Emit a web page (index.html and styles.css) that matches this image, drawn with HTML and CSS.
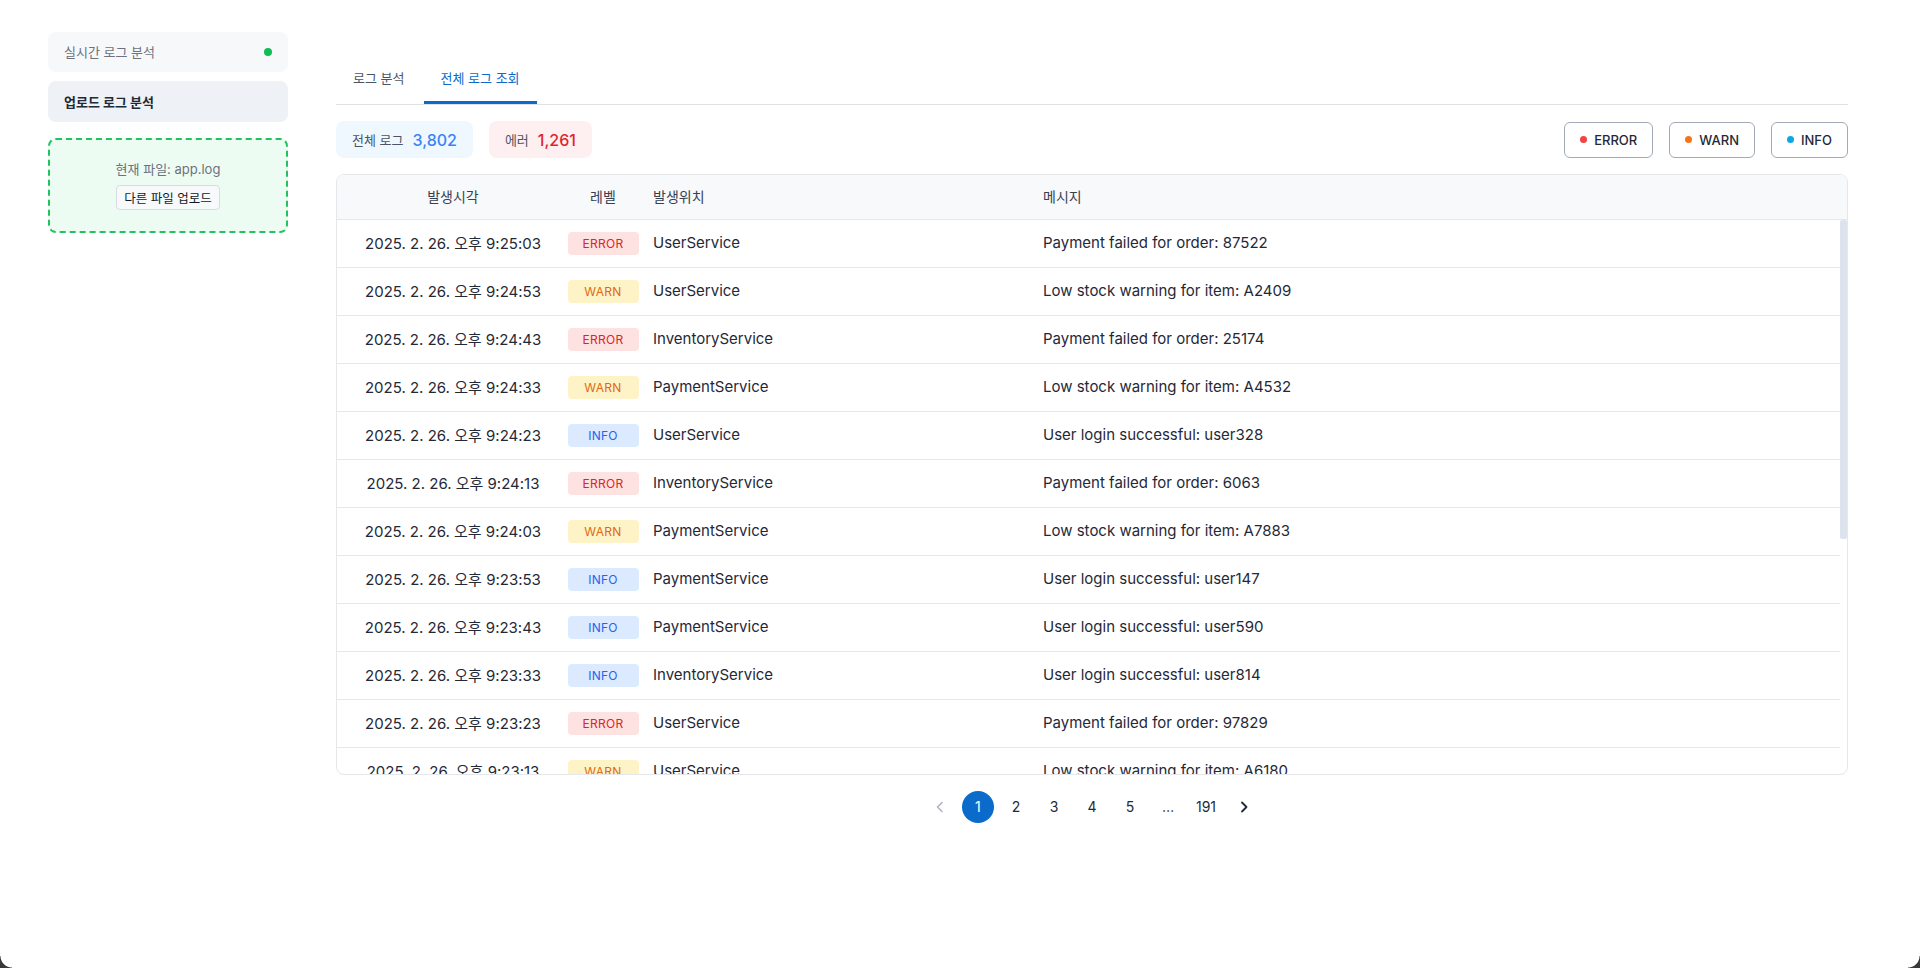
FILE: index.html
```html
<!DOCTYPE html>
<html lang="ko">
<head>
<meta charset="utf-8">
<title>로그 분석</title>
<link rel="stylesheet" href="styles.css">
</head>
<body>
<div class="page">
  <aside class="sidebar">
    <div class="nav-item nav-live">
      <span>실시간 로그 분석</span>
      <span class="live-dot"></span>
    </div>
    <div class="nav-item nav-active">업로드 로그 분석</div>
    <div class="upload-box">
      <div class="current-file">현재 파일: app.log</div>
      <button class="upload-btn">다른 파일 업로드</button>
    </div>
  </aside>

  <main class="main">
    <div class="tabs">
      <div class="tab">로그 분석</div>
      <div class="tab tab-active">전체 로그 조회</div>
    </div>

    <div class="toolbar">
      <div class="stats">
        <div class="stat stat-total"><span class="stat-label">전체 로그</span><span class="stat-num">3,802</span></div>
        <div class="stat stat-error"><span class="stat-label">에러</span><span class="stat-num">1,261</span></div>
      </div>
      <div class="filters">
        <button class="filter"><span class="dot dot-error"></span>ERROR</button>
        <button class="filter"><span class="dot dot-warn"></span>WARN</button>
        <button class="filter"><span class="dot dot-info"></span>INFO</button>
      </div>
    </div>

    <div class="table">
      <div class="row head">
        <div class="c-time">발생시각</div>
        <div class="c-level">레벨</div>
        <div class="c-src">발생위치</div>
        <div class="c-msg">메시지</div>
      </div>
      <div class="body">
        <div class="row"><div class="c-time">2025. 2. 26. 오후 9:25:03</div><div class="c-level"><span class="badge b-error">ERROR</span></div><div class="c-src">UserService</div><div class="c-msg">Payment failed for order: 87522</div></div>
        <div class="row"><div class="c-time">2025. 2. 26. 오후 9:24:53</div><div class="c-level"><span class="badge b-warn">WARN</span></div><div class="c-src">UserService</div><div class="c-msg">Low stock warning for item: A2409</div></div>
        <div class="row"><div class="c-time">2025. 2. 26. 오후 9:24:43</div><div class="c-level"><span class="badge b-error">ERROR</span></div><div class="c-src">InventoryService</div><div class="c-msg">Payment failed for order: 25174</div></div>
        <div class="row"><div class="c-time">2025. 2. 26. 오후 9:24:33</div><div class="c-level"><span class="badge b-warn">WARN</span></div><div class="c-src">PaymentService</div><div class="c-msg">Low stock warning for item: A4532</div></div>
        <div class="row"><div class="c-time">2025. 2. 26. 오후 9:24:23</div><div class="c-level"><span class="badge b-info">INFO</span></div><div class="c-src">UserService</div><div class="c-msg">User login successful: user328</div></div>
        <div class="row"><div class="c-time">2025. 2. 26. 오후 9:24:13</div><div class="c-level"><span class="badge b-error">ERROR</span></div><div class="c-src">InventoryService</div><div class="c-msg">Payment failed for order: 6063</div></div>
        <div class="row"><div class="c-time">2025. 2. 26. 오후 9:24:03</div><div class="c-level"><span class="badge b-warn">WARN</span></div><div class="c-src">PaymentService</div><div class="c-msg">Low stock warning for item: A7883</div></div>
        <div class="row"><div class="c-time">2025. 2. 26. 오후 9:23:53</div><div class="c-level"><span class="badge b-info">INFO</span></div><div class="c-src">PaymentService</div><div class="c-msg">User login successful: user147</div></div>
        <div class="row"><div class="c-time">2025. 2. 26. 오후 9:23:43</div><div class="c-level"><span class="badge b-info">INFO</span></div><div class="c-src">PaymentService</div><div class="c-msg">User login successful: user590</div></div>
        <div class="row"><div class="c-time">2025. 2. 26. 오후 9:23:33</div><div class="c-level"><span class="badge b-info">INFO</span></div><div class="c-src">InventoryService</div><div class="c-msg">User login successful: user814</div></div>
        <div class="row"><div class="c-time">2025. 2. 26. 오후 9:23:23</div><div class="c-level"><span class="badge b-error">ERROR</span></div><div class="c-src">UserService</div><div class="c-msg">Payment failed for order: 97829</div></div>
        <div class="row"><div class="c-time">2025. 2. 26. 오후 9:23:13</div><div class="c-level"><span class="badge b-warn">WARN</span></div><div class="c-src">UserService</div><div class="c-msg">Low stock warning for item: A6180</div></div>
      </div>
      <div class="scroll-thumb"></div>
    </div>

    <nav class="pager">
      <span class="pg pg-arrow pg-disabled"><svg width="10" height="12" viewBox="0 0 10 12"><path d="M7 1.5 L2.5 6 L7 10.5" fill="none" stroke="currentColor" stroke-width="1.6" stroke-linecap="round" stroke-linejoin="round"/></svg></span>
      <span class="pg pg-active">1</span>
      <span class="pg">2</span>
      <span class="pg">3</span>
      <span class="pg">4</span>
      <span class="pg">5</span>
      <span class="pg">…</span>
      <span class="pg">191</span>
      <span class="pg pg-arrow"><svg width="10" height="12" viewBox="0 0 10 12"><path d="M3 1.5 L7.5 6 L3 10.5" fill="none" stroke="currentColor" stroke-width="1.8" stroke-linecap="round" stroke-linejoin="round"/></svg></span>
    </nav>
  </main>
</div>
</body>
</html>
```

FILE: styles.css
```css
* { box-sizing: border-box; }

html, body {
  margin: 0;
  padding: 0;
  background: #ffffff;
  height: 100%;
}

body {
  font-family: Inter, "Noto Sans CJK KR", sans-serif;
  color: #1f2937;
  overflow: hidden;
}

body::before,
body::after {
  content: "";
  position: fixed;
  bottom: 0;
  width: 12px;
  height: 12px;
  pointer-events: none;
}
body::before {
  left: 0;
  background: radial-gradient(circle at 12px 0, transparent 11px, #3a3a3a 12px);
}
body::after {
  right: 0;
  background: radial-gradient(circle at 0 0, transparent 11px, #3a3a3a 12px);
}

.page {
  display: flex;
  padding: 32px 72px 0 48px;
  gap: 48px;
}

/* Sidebar */
.sidebar {
  width: 240px;
  flex: none;
  display: flex;
  flex-direction: column;
}

.nav-item {
  height: 40px;
  border-radius: 8px;
  padding: 0 16px 1px;
  display: flex;
  align-items: center;
  justify-content: space-between;
  font-size: 13px;
}

.nav-live {
  background: #f7f8fa;
  color: #6b7280;
}

.live-dot {
  width: 8px;
  height: 8px;
  border-radius: 50%;
  background: #12bb55;
}

.nav-active {
  margin-top: 9px;
  height: 41px;
  background: #eef1f5;
  color: #1f2937;
  font-weight: 700;
}

.upload-box {
  margin-top: 16px;
  height: 95px;
  border: 2px dashed #22c35e;
  border-radius: 8px;
  background: #edfcf2;
  display: flex;
  flex-direction: column;
  align-items: center;
  padding-top: 19px;
}

.current-file {
  font-size: 13px;
  color: #6b7280;
  line-height: 20px;
}

.upload-btn {
  margin-top: 6px;
  height: 25px;
  padding: 0 7px;
  font-family: Inter, "Noto Sans CJK KR", sans-serif;
  font-size: 12.5px;
  color: #111827;
  background: #f8f9fb;
  border: 1px solid #d7dbe2;
  border-radius: 4px;
}

/* Main */
.main {
  flex: 1;
  min-width: 0;
  padding-top: 28px;
}

.tabs {
  display: flex;
  gap: 2px;
  border-bottom: 1px solid #e0e0e0;
}

.tab {
  padding: 8px 17px 13px;
  line-height: 20px;
  font-size: 13px;
  color: #4b5563;
  border-bottom: 3px solid transparent;
}

.tab-active {
  color: #0b6bcb;
  border-bottom-color: #0b6bcb;
}

.toolbar {
  margin-top: 16px;
  display: flex;
  justify-content: space-between;
  align-items: center;
}

.stats, .filters {
  display: flex;
  gap: 16px;
}

.stat {
  height: 37px;
  padding: 0 16px;
  border-radius: 8px;
  display: flex;
  align-items: center;
  gap: 9px;
}

.stat-label {
  font-size: 13px;
  color: #4b5563;
}

.stat-num {
  font-size: 16px;
  font-weight: 500;
}

.stat-total { background: #eff8ff; }
.stat-total .stat-num { color: #3b82f6; }
.stat-error { background: #fef0f0; }
.stat-error .stat-num { color: #e0242f; }

.filter {
  height: 36px;
  padding: 0 15px;
  border: 1px solid #a3aab6;
  border-radius: 6px;
  background: #ffffff;
  display: flex;
  align-items: center;
  gap: 7px;
  font-family: Inter, "Noto Sans CJK KR", sans-serif;
  font-size: 13px;
  font-weight: 500;
  color: #1f2937;
}

.dot {
  width: 7px;
  height: 7px;
  border-radius: 50%;
}
.dot-error { background: #ef4444; }
.dot-warn { background: #f97316; }
.dot-info { background: #0ea5e9; }

/* Table */
.table {
  position: relative;
  margin-top: 16px;
  border: 1px solid #e5e7eb;
  border-radius: 8px;
  overflow: hidden;
}

.row {
  display: grid;
  grid-template-columns: 224px 84px 390px 1fr;
  align-items: center;
  height: 48px;
  border-bottom: 1px solid #e5e7eb;
  font-size: 15px;
}

.row > div { padding-left: 8px; padding-bottom: 3px; }
.row > .c-level { padding-left: 0; padding-bottom: 0; display: flex; justify-content: center; }
.c-time { text-align: center; white-space: nowrap; }

.head {
  height: 45px;
  background: #f8f9fb;
  font-size: 14px;
  color: #374151;
}
.head > .c-level { padding-bottom: 3px; }

.body {
  height: 554px;
  overflow-y: auto;
  padding-right: 7px;
  scrollbar-width: none;
}

.body .row { color: #1f2937; }

.scroll-thumb {
  position: absolute;
  right: 0;
  top: 45px;
  width: 7px;
  height: 319px;
  background: #dde3ec;
  border-radius: 2px;
}

.badge {
  width: 71px;
  height: 23px;
  border-radius: 4px;
  display: flex;
  align-items: center;
  justify-content: center;
  font-size: 12px;
  letter-spacing: 0.3px;
}
.b-error { background: #fee2e2; color: #dc2626; }
.b-warn { background: #fef3c7; color: #dd6b10; }
.b-info { background: #dbeafe; color: #2563eb; }

/* Pager */
.pager {
  margin-top: 16px;
  display: flex;
  justify-content: center;
  gap: 6px;
}

.pg {
  min-width: 32px;
  height: 32px;
  padding: 0 6px;
  border-radius: 16px;
  display: flex;
  align-items: center;
  justify-content: center;
  font-size: 14px;
  line-height: 16px;
  color: #1f2937;
}

.pg-active {
  background: #0b6bcb;
  color: #ffffff;
}

.pg-disabled { color: #b0b5bd; }
```
